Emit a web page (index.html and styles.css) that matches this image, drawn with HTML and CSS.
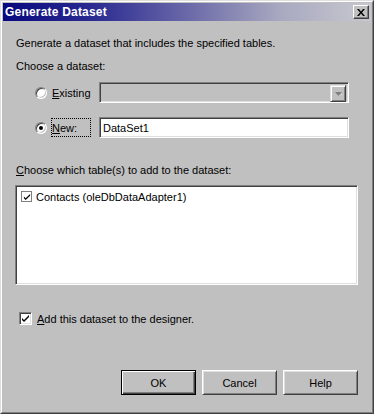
FILE: index.html
```html
<!DOCTYPE html>
<html lang="en">
<head>
    <meta charset="UTF-8">
    <title>Generate Dataset</title>
    <link rel="stylesheet" href="styles.css">
</head>
<body>
    <div class="window">
        <div class="frame">
            <div class="titlebar">
                <span class="title">Generate Dataset</span>
                <span class="close">
                    <svg width="8" height="7" viewBox="0 0 8 7"><path d="M0 0h2l2 2.5L6 0h2L5 3.5 8 7H6L4 4.5 2 7H0l3-3.5z" fill="#000"/></svg>
                </span>
            </div>

            <div class="content">
                <p class="intro">Generate a dataset that includes the specified tables.</p>
                <p class="section">Choose a dataset:</p>

                <div class="option-row first">
                    <span class="radio"></span>
                    <span class="option-label"><u>E</u>xisting</span>
                    <div class="combo sunken">
                        <span class="drop-btn">
                            <svg width="7" height="4" viewBox="0 0 7 4"><path d="M0 0h7L3.5 4z" fill="#808080"/><path d="M4 4h1l2-2.5v1z" fill="#fff"/></svg>
                        </span>
                    </div>
                </div>

                <div class="option-row second">
                    <span class="radio checked"></span>
                    <span class="option-label focus"><u>N</u>ew:</span>
                    <div class="textbox sunken">DataSet1</div>
                </div>

                <p class="section tables"><u>C</u>hoose which table(s) to add to the dataset:</p>

                <div class="listbox sunken">
                    <div class="list-item">
                        <span class="flat-check">
                            <svg width="9" height="9" viewBox="0 0 9 9"><path d="M1 4l2 2 5-5v2L3 8 1 6z" fill="#000"/></svg>
                        </span>
                        Contacts (oleDbDataAdapter1)
                    </div>
                </div>

                <div class="check-row">
                    <span class="check sunken">
                        <svg width="9" height="9" viewBox="0 0 9 9"><path d="M1 4l2 2 5-5v2L3 8 1 6z" fill="#000"/></svg>
                    </span>
                    <span class="check-label"><u>A</u>dd this dataset to the designer.</span>
                </div>

                <div class="buttons">
                    <span class="btn default">OK</span>
                    <span class="btn">Cancel</span>
                    <span class="btn">Help</span>
                </div>
            </div>
        </div>
    </div>
</body>
</html>
```

FILE: styles.css
```css
html, body {
    margin: 0;
    padding: 0;
}

body {
    width: 374px;
    height: 414px;
    font-family: "Liberation Sans", Arial, sans-serif;
    font-size: 11px;
    color: #000;
    background: #c0c0c0;
}

/* outer 3d frame of the dialog */
.window {
    box-sizing: border-box;
    width: 374px;
    height: 414px;
    border: 1px solid;
    border-color: #dfdfdf #404040 #404040 #dfdfdf;
}

.frame {
    box-sizing: border-box;
    height: 100%;
    border: 1px solid;
    border-color: #fff #808080 #808080 #fff;
    padding: 1px;
    display: flex;
    flex-direction: column;
}

.titlebar {
    height: 18px;
    display: flex;
    align-items: center;
    justify-content: space-between;
    padding: 0 2px 0 2px;
    background: linear-gradient(to right, #08087f 0%, #2c2c92 25%, #6a68a8 50%, #a8a8c0 75%, #c8c8d0 100%);
}

.title {
    color: #fff;
    font-weight: bold;
    font-size: 12px;
    letter-spacing: 0.2px;
}

.close {
    box-sizing: border-box;
    width: 16px;
    height: 14px;
    background: #c0c0c0;
    border: 1px solid;
    border-color: #fff #404040 #404040 #fff;
    box-shadow: inset -1px -1px #808080;
    display: flex;
    align-items: center;
    justify-content: center;
}

.content {
    flex: 1;
    padding: 0 13px 0 12px;
    display: flex;
    flex-direction: column;
}

p {
    margin: 0;
    line-height: 13px;
}

.intro {
    margin-top: 16px;
    padding-left: 1px;
}

.section {
    margin-top: 10px;
    padding-left: 1px;
}

.section.tables {
    margin-top: 26px;
}

/* sunken 3d edge used by fields */
.sunken {
    box-sizing: border-box;
    border: 1px solid;
    border-color: #808080 #fff #fff #808080;
    box-shadow: inset 1px 1px #404040, inset -1px -1px #dfdfdf;
}

.option-row {
    display: flex;
    align-items: center;
    height: 21px;
    padding-left: 20px;
}

.option-row.first {
    margin-top: 9px;
}

.option-row.second {
    margin-top: 14px;
}

.radio {
    box-sizing: border-box;
    width: 12px;
    height: 12px;
    border-radius: 50%;
    background: #fff;
    border: 1px solid;
    border-color: #808080 #fff #fff #808080;
    box-shadow: inset 1px 1px #404040, inset -1px -1px #c0c0c0;
    display: flex;
    align-items: center;
    justify-content: center;
}

.radio.checked::after {
    content: "";
    width: 4px;
    height: 4px;
    border-radius: 50%;
    background: #000;
}

.option-label {
    box-sizing: border-box;
    width: 40px;
    height: 19px;
    margin-left: 4px;
    margin-right: 8px;
    padding-left: 1px;
    display: flex;
    align-items: center;
}

.option-label.focus {
    outline: 1px dotted #000;
    outline-offset: -1px;
}

.combo {
    width: 250px;
    height: 21px;
    background: #c0c0c0;
    display: flex;
    justify-content: flex-end;
    padding: 2px;
}

.drop-btn {
    box-sizing: border-box;
    width: 16px;
    height: 17px;
    border: 1px solid;
    border-color: #dfdfdf #404040 #404040 #dfdfdf;
    box-shadow: inset 1px 1px #fff, inset -1px -1px #808080;
    display: flex;
    align-items: center;
    justify-content: center;
}

.textbox {
    width: 250px;
    height: 21px;
    background: #fff;
    padding: 0 3px;
    display: flex;
    align-items: center;
}

.listbox {
    margin-top: 8px;
    width: 343px;
    height: 100px;
    background: #fff;
    padding: 4px 4px;
}

.list-item {
    display: flex;
    align-items: center;
    height: 13px;
    padding-left: 1px;
}

.flat-check {
    box-sizing: border-box;
    width: 11px;
    height: 11px;
    border: 1px solid #808080;
    margin-right: 4px;
    display: flex;
    align-items: center;
    justify-content: center;
    background: #fff;
}

.flat-check svg {
    width: 8px;
    height: 8px;
}

.check-row {
    display: flex;
    align-items: center;
    margin-top: 27px;
    padding-left: 4px;
    height: 13px;
}

.check {
    width: 13px;
    height: 13px;
    background: #fff;
    display: flex;
    align-items: center;
    justify-content: center;
    margin-right: 5px;
}

.buttons {
    margin-top: 45px;
    display: flex;
    justify-content: flex-end;
    gap: 6px;
}

.btn {
    box-sizing: border-box;
    width: 75px;
    height: 25px;
    display: flex;
    align-items: center;
    justify-content: center;
    border: 1px solid;
    border-color: #fff #404040 #404040 #fff;
    box-shadow: inset 1px 1px #dfdfdf, inset -1px -1px #808080;
}

.btn.default {
    border: 1px solid #000;
    box-shadow: inset 1px 1px #fff, inset -1px -1px #404040, inset -2px -2px #808080;
}
```
